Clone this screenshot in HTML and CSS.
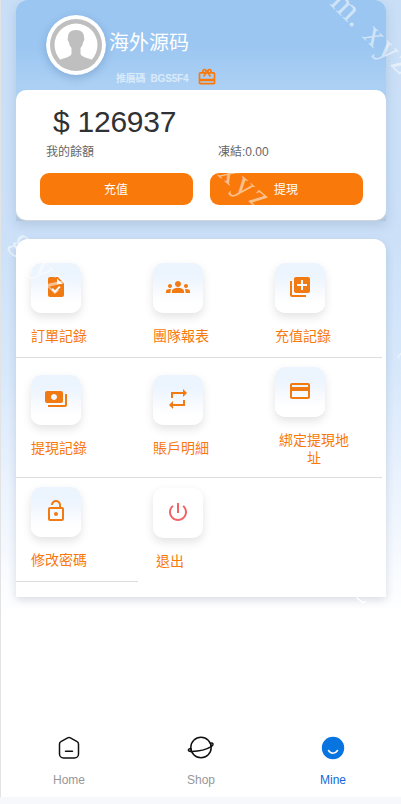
FILE: index.html
```
<!DOCTYPE html>
<html lang="zh-Hant">
<head>
<meta charset="utf-8">
<title>Mine</title>
<link rel="stylesheet" href="styles.css">
</head>
<body>
<div class="page">
  <main class="content">
    <section class="profile">
      <div class="user">
        <svg class="avatar" viewBox="0 0 60 60"><circle cx="30" cy="30" r="30" fill="#fff"/><circle cx="30" cy="30" r="26" fill="#bfbfbf"/><circle cx="30" cy="30" r="21.5" fill="#fff"/><path d="M30 15c-5.500 0-8.200 3-8 7.500-.8.8-.2 4 .9 4.500.3 3 1.200 4.500 2.600 6v6c-1.500 3.500-8 3.800-12.500 6.500Q18 55 30 55t17-9.500c-4.500-2.700-11-3-12.500-6.500v-6c1.400-1.500 2.300-3 2.600-6 1.100-.5 1.700-3.700.9-4.500C38.200 18 35.500 15 30 15z" fill="#bfbfbf"/></svg>
        <div class="user-info">
          <div class="name">海外源码</div>
          <div class="invite"><span>推廣碼&nbsp; BGS5F4</span><svg class="gift" viewBox="0 0 24 24"><path d="M20 6h-2.180c.11-.31.180-.65.180-1 0-1.660-1.340-3-3-3-1.050 0-1.960.54-2.500 1.350l-.5.670-.5-.68C10.960 2.540 10.050 2 9 2 7.340 2 6 3.340 6 5c0 .35.070.69.180 1H4c-1.110 0-1.990.89-1.990 2L2 19c0 1.110.89 2 2 2h16c1.110 0 2-.89 2-2V8c0-1.110-.89-2-2-2zm-5-2c.55 0 1 .45 1 1s-.45 1-1 1-1-.45-1-1 .45-1 1-1zM9 4c.55 0 1 .45 1 1s-.45 1-1 1-1-.45-1-1 .45-1 1-1zm11 15H4v-2h16v2zm0-5H4V8h5.080L7 10.830 8.620 12 12 7.400l3.380 4.600L17 10.830 14.920 8H20v6z"/></svg></div>
        </div>
      </div>
      <div class="wallet">
        <div class="amount">$ 126937</div>
        <div class="balance"><span>我的餘額</span><span>凍結:0.00</span></div>
        <div class="actions"><button>充值</button><button>提現</button></div>
      </div>
    </section>

    <section class="menu">
      <a class="item lined"><span class="tile"><svg viewBox="0 0 24 24"><path d="M14 2H6c-1.100 0-1.990.9-1.990 2L4 20c0 1.100.89 2 1.990 2H18c1.100 0 2-.9 2-2V8l-6-6zm-3.060 16L7.400 14.460l1.410-1.410 2.120 2.120 4.240-4.240 1.410 1.410L10.940 18zM13 9V3.500L18.500 9H13z"/></svg></span><span class="label">訂單記錄</span></a>
      <a class="item lined"><span class="tile"><svg viewBox="0 0 24 24"><path d="M12 12.750c1.630 0 3.070.39 4.240.9 1.080.48 1.760 1.560 1.760 2.730V18H6v-1.610c0-1.180.68-2.260 1.760-2.730 1.170-.52 2.610-.91 4.240-.91zM4 13c1.100 0 2-.9 2-2s-.9-2-2-2-2 .9-2 2 .9 2 2 2zm1.130 1.100C4.760 14.040 4.390 14 4 14c-.99 0-1.930.21-2.780.58C.48 14.900 0 15.620 0 16.430V18h4.500v-1.610c0-.83.23-1.610.63-2.290zM20 13c1.100 0 2-.9 2-2s-.9-2-2-2-2 .9-2 2 .9 2 2 2zm4 3.430c0-.81-.48-1.530-1.220-1.850C21.930 14.210 20.990 14 20 14c-.39 0-.76.040-1.130.1.4.68.63 1.460.63 2.290V18H24v-1.570zM12 6c1.660 0 3 1.340 3 3s-1.340 3-3 3-3-1.340-3-3 1.340-3 3-3z"/></svg></span><span class="label">團隊報表</span></a>
      <a class="item lined"><span class="tile"><svg viewBox="0 0 24 24"><path d="M4 6H2v14c0 1.100.9 2 2 2h14v-2H4V6zm16-4H8c-1.100 0-2 .9-2 2v12c0 1.100.9 2 2 2h12c1.100 0 2-.9 2-2V4c0-1.100-.9-2-2-2zm-1 9h-4v4h-2v-4H9V9h4V5h2v4h4v2z"/></svg></span><span class="label">充值記錄</span></a>
      <a class="item lined"><span class="tile"><svg viewBox="0 0 24 24"><path d="M19 14V6c0-1.100-.9-2-2-2H3c-1.100 0-2 .9-2 2v8c0 1.100.9 2 2 2h14c1.100 0 2-.9 2-2zm-9-1c-1.660 0-3-1.340-3-3s1.340-3 3-3 3 1.340 3 3-1.340 3-3 3zm13-6v11c0 1.100-.9 2-2 2H4v-2h17V7h2z"/></svg></span><span class="label">提現記錄</span></a>
      <a class="item lined"><span class="tile"><svg viewBox="0 0 24 24"><path d="M7 7h10v3l4-4-4-4v3H5v6h2V7zm10 10H7v-3l-4 4 4 4v-3h12v-6h-2v4z"/></svg></span><span class="label">賬戶明細</span></a>
      <a class="item lined tall"><span class="tile"><svg viewBox="0 0 24 24"><path d="M20 4H4c-1.110 0-1.990.89-1.990 2L2 18c0 1.110.89 2 2 2h16c1.110 0 2-.89 2-2V6c0-1.110-.89-2-2-2zm0 14H4v-6h16v6zm0-10H4V6h16v2z"/></svg></span><span class="label wrap">綁定提現地址</span></a>
      <a class="item lined"><span class="tile"><svg viewBox="0 0 24 24"><path d="M12 17c1.100 0 2-.9 2-2s-.9-2-2-2-2 .9-2 2 .9 2 2 2zm6-9h-1V6c0-2.760-2.240-5-5-5S7 3.240 7 6h1.900c0-1.710 1.390-3.100 3.100-3.100s3.100 1.390 3.100 3.100v2H6c-1.100 0-2 .9-2 2v10c0 1.100.9 2 2 2h12c1.100 0 2-.9 2-2V10c0-1.100-.9-2-2-2zm0 12H6V10h12v10z"/></svg></span><span class="label">修改密碼</span></a>
      <a class="item logout"><span class="tile"><svg viewBox="0 0 24 24"><path d="M13 3h-2v10h2V3zm4.830 2.170l-1.420 1.420C17.990 7.860 19 9.810 19 12c0 3.870-3.130 7-7 7s-7-3.130-7-7c0-2.190 1.010-4.140 2.580-5.420L6.170 5.170C4.230 6.820 3 9.260 3 12c0 4.970 4.030 9 9 9s9-4.030 9-9c0-2.740-1.230-5.180-3.170-6.830z"/></svg></span><span class="label">退出</span></a>
    </section>
  </main>

  <nav class="tabs">
    <a class="tab"><svg viewBox="0 0 28 28"><path d="M12.600 3.800 5.900 7.600a2.500 2.500 0 0 0-1.400 2.300v10a4 4 0 0 0 4 4h11a4 4 0 0 0 4-4v-10a2.500 2.500 0 0 0-1.400-2.300l-6.700-3.800a2.800 2.800 0 0 0-2.800 0zM10.500 17.200h7" /></svg><span>Home</span></a>
    <a class="tab"><svg viewBox="0 0 28 28"><circle cx="14" cy="13.500" r="10.200"/><path d="M3.800 14.300c-3.200.7-3.200 3-.5 3.100 7.800.2 16.500-2 21.300-5 2.500-1.800 1.600-3.900-1.300-3.100M3.700 14.700l.6 2.600M23.500 9.500l.8 3.200"/></svg><span>Shop</span></a>
    <a class="tab active"><svg viewBox="0 0 28 28"><circle cx="14" cy="14" r="11.200"/><path d="M9.500 16.500c2.200 3.600 6.800 3.600 9 0"/></svg><span>Mine</span></a>
  </nav>
</div>

<svg class="watermark" viewBox="0 0 401 804">
  <text transform="translate(329 4) rotate(45)" x="0 26 46 66 86">m.xyz</text>
  <text transform="translate(217 175) rotate(40)" x="0 20 40">xyz</text>
  <text transform="translate(10 243) rotate(45)" x="0">g</text>
  <text class="soft" transform="translate(31 270) rotate(45)" x="0 20">yz</text>
  <text class="faint" transform="translate(396 356) rotate(45)">t</text>
  <path d="M356.500 597.500l7 5.500 2-2"/>
</svg>
</body>
</html>
```
FILE: styles.css
```
* { box-sizing: border-box; }
body {
  margin: 0;
  background: #f7f8fc;
  font-family: "Liberation Sans", "Noto Sans CJK TC", sans-serif;
}
.page {
  height: 797px;
  border-left: 1px solid #e3e3e3;
  display: flex;
  flex-direction: column;
  justify-content: space-between;
  background: linear-gradient(#c9dff7 0, #cce1f8 240px, #d7e8fb 370px, #edf4fe 500px, #fff 615px);
}
.content { padding: 0 15px; }
.profile {
  height: 221px;
  border-radius: 12px 12px 0 0;
  background: linear-gradient(#9bc6f1 0, #9bc6f1 45px, #acd0f4 85px, #acd0f4 125px, #c9def5 205px, #afc5dc 221px);
  box-shadow: 0 4px 12px rgba(65, 100, 140, .2);
}
.user { display: flex; height: 90px; padding: 15px 0 0 30px; }
.avatar {
  width: 60px;
  height: 60px;
  border-radius: 50%;
  box-shadow: 0 3px 8px rgba(60, 100, 150, .3);
}
.user-info { padding: 14px 0 0 3px; color: #fff; }
.name { font-size: 20px; line-height: 26px; font-family: "Noto Sans CJK SC", sans-serif; }
.invite {
  display: flex;
  align-items: center;
  height: 20px;
  margin: 12px 0 0 7px;
  font-size: 10px;
  font-weight: bold;
  letter-spacing: -.2px;
  color: #dbeafa;
  white-space: nowrap;
}
.gift { width: 20px; height: 20px; margin-left: 9px; fill: #fb790b; }
.wallet {
  height: 130px;
  border-radius: 10px;
  background: #fff;
  box-shadow: 0 1px 1px #d3d6da;
}
.amount { padding: 14px 0 0 37px; font-size: 30px; line-height: 36px; letter-spacing: -.25px; color: #303133; }
.balance {
  display: grid;
  grid-template-columns: 172px 1fr;
  padding: 3px 0 0 30px;
  font-size: 12px;
  line-height: 18px;
  color: #666;
}
.actions { display: flex; gap: 17px; padding: 12px 0 0 24px; }
.actions button {
  width: 153px;
  height: 32px;
  padding: 0 1px 2px 0;
  border: 0;
  border-radius: 9px;
  background: #fa790b;
  color: #fff;
  font: 12px "Liberation Sans", "Noto Sans CJK TC", sans-serif;
}
.menu {
  display: grid;
  grid-template-columns: repeat(3, 122px);
  grid-template-rows: 104px 120px 104px;
  margin-top: 18px;
  padding: 15px 0;
  border-radius: 12px 12px 0 0;
  background: #fff;
  box-shadow: 0 3px 9px rgba(70, 90, 110, .2);
}
.item {
  display: flex;
  flex-direction: column;
  justify-content: center;
  align-items: flex-start;
  padding: 0 0 3px 15px;
  border-bottom: 1px solid transparent;
}
.tall { padding-bottom: 1px; }
.lined { border-color: #dcdddf; }
.tile {
  display: flex;
  align-items: center;
  justify-content: center;
  width: 50px;
  height: 50px;
  padding-bottom: 2px;
  border-radius: 10px;
  background: linear-gradient(#ecf4fe 25%, #fff 80%);
  box-shadow: 0 4px 9px rgba(80, 80, 80, .16);
}
.tile svg { width: 24px; height: 24px; fill: #f27a12; }
.label {
  margin-top: 15px;
  font-size: 14px;
  line-height: 17.5px;
  color: #f8790b;
  text-align: center;
}
.wrap { width: 78px; padding: 0 4px; }
.logout { padding-bottom: 1px; }
.logout .tile { background: #fff; }
.logout .tile svg { fill: #ef6467; }
.logout .label { margin-left: 3px; }
.tabs {
  display: grid;
  grid-template-columns: repeat(3, 132px);
  height: 77px;
  padding: 14px 0 0 2px;
}
.tab { display: flex; flex-direction: column; align-items: center; color: #969799; font-size: 12px; line-height: 16px; }
.tab svg { width: 28px; height: 28px; margin-bottom: 10px; fill: none; stroke: #111; stroke-width: 1.5; stroke-linecap: round; stroke-linejoin: round; }
.tab.active { color: #1268db; }
.tab.active circle { fill: #0874df; stroke: none; }
.tab.active path { stroke: #fff; }
.watermark {
  position: absolute;
  top: 0;
  left: 0;
  width: 401px;
  height: 804px;
  overflow: hidden;
  pointer-events: none;
  font: 34px "Liberation Serif", serif;
  fill: rgba(255, 255, 255, .55);
}
.watermark .faint { font-size: 16px; }
.watermark path { fill: none; stroke: #fff; stroke-width: 1.5; }
```
